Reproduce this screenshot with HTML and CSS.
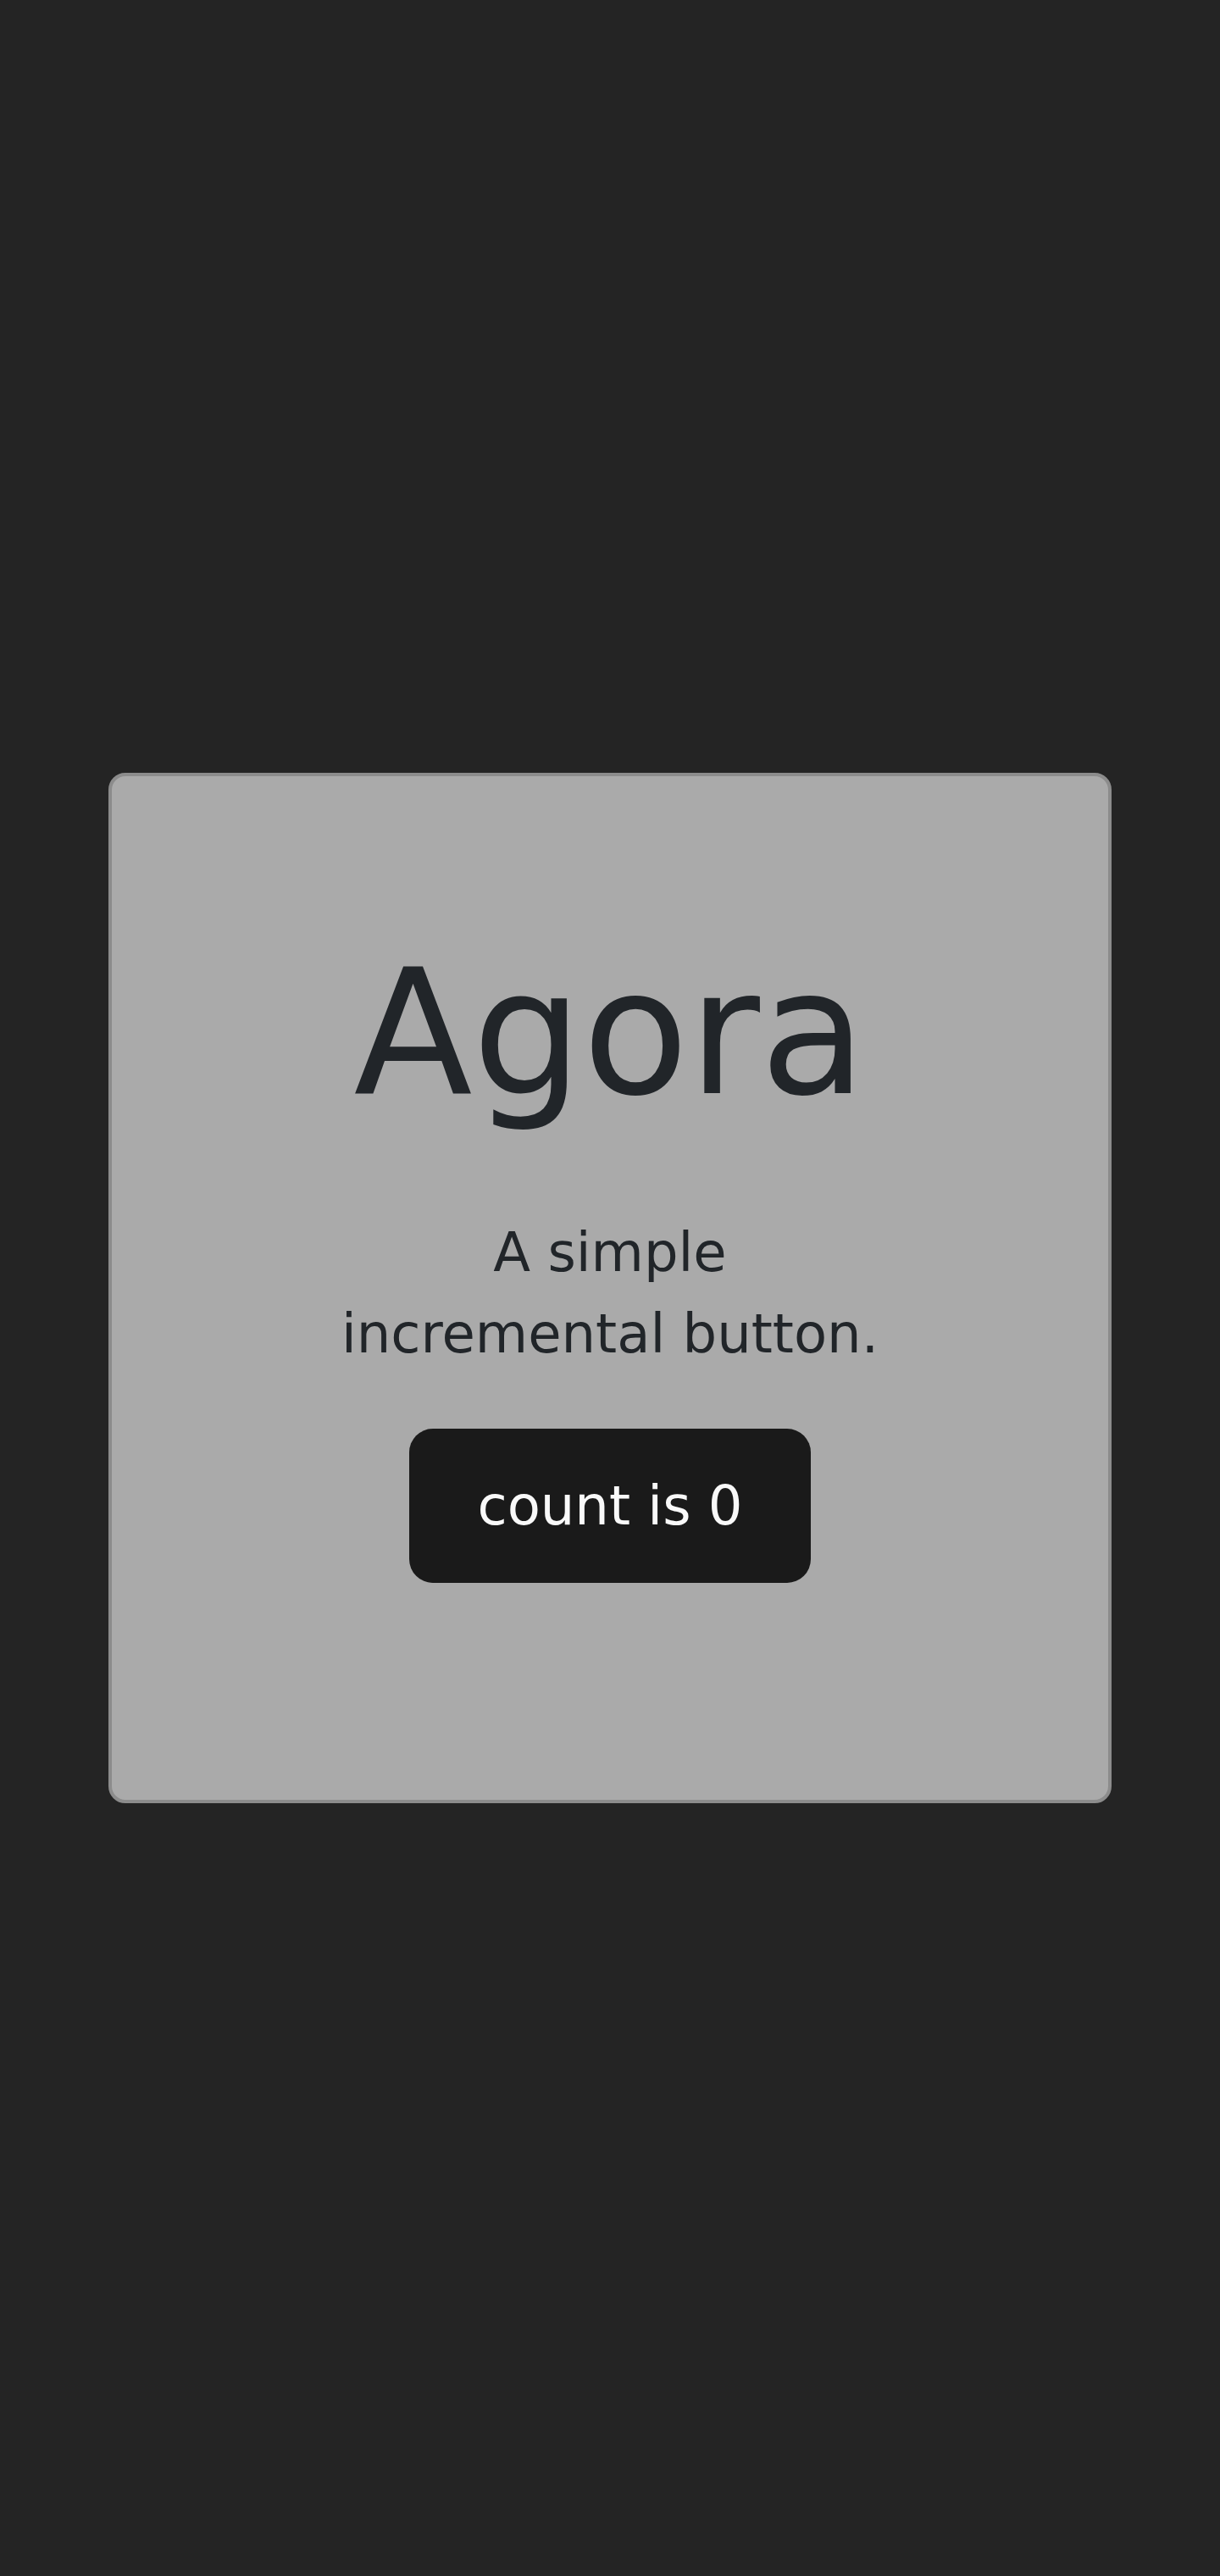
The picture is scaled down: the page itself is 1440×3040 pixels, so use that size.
FILE: index.html
```html
<!DOCTYPE html>
<html lang="en">
<head>
<meta charset="utf-8">
<title>Agora</title>
<link rel="stylesheet" href="styles.css">
</head>
<body>
<main class="page">
  <section class="card">
    <h1 class="title">Agora</h1>
    <p class="subtitle">A simple incremental button.</p>
    <button class="counter" type="button">count is 0</button>
  </section>
</main>
</body>
</html>
```

FILE: styles.css
```css
html, body {
  margin: 0;
  padding: 0;
}

body {
  background: #242424;
  font-family: "DejaVu Sans", sans-serif;
  font-size: 64px;
  line-height: 1.5;
  color: #212529;
}

.page {
  min-height: 3040px;
  display: flex;
  align-items: center;
  justify-content: center;
  padding: 0 128px;
  box-sizing: border-box;
}

.card {
  width: 1184px;
  box-sizing: border-box;
  background: #aaaaaa;
  border: 4px solid #8c8c8c;
  border-radius: 20px;
  padding: 191px 0 256px;
  display: flex;
  flex-direction: column;
  align-items: center;
  text-align: center;
}

.title {
  margin: 0;
  font-size: 204.8px;
  line-height: 1.1;
  font-weight: 400;
  color: #212529;
}

.subtitle {
  margin: 97px 0 64px;
  max-width: 650px;
  font-size: 64px;
  line-height: 96px;
  color: #212529;
}

.counter {
  font-family: inherit;
  font-size: 64px;
  line-height: 96px;
  padding: 42px 79px;
  border: 1px solid transparent;
  border-radius: 28px;
  background: #1a1a1a;
  color: #f9f9f9;
  cursor: pointer;
}
```
